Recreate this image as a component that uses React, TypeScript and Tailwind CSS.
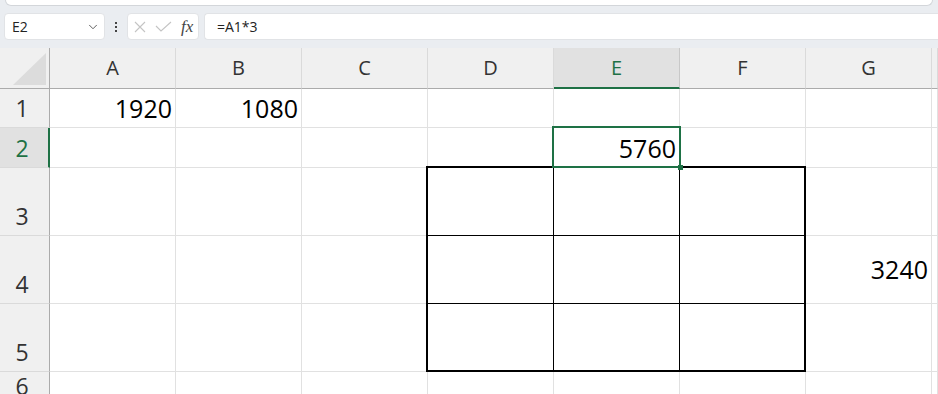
import { ChevronDown } from "lucide-react";

const COLS = ["A", "B", "C", "D", "E", "F", "G", ""];
const ROWS = [1, 2, 3, 4, 5, 6];

const VALUES: Record<string, string> = {
  "1A": "1920",
  "1B": "1080",
  "2E": "5760",
  "4G": "3240",
};

const GREEN = "#1e7145";

function inBox(row: number, col: string) {
  return row >= 3 && row <= 5 && (col === "D" || col === "E" || col === "F");
}

function Toolbar() {
  return (
    <div className="h-[48px] bg-[#eaedf1] flex flex-col">
      {/* top ribbon edge */}
      <div className="h-[6px] mx-[5px] bg-white border-x border-b border-[#d3d6da] rounded-b-[6px]" />

      {/* formula bar */}
      <div className="mt-[7px] h-[27px] flex items-stretch">
        <div className="ml-[4px] w-[101px] bg-white border border-[#e1e3e6] rounded-[4px] flex items-center pl-[7px] pr-[4px]">
          <span className="flex-1 text-[14px] text-[#222]">E2</span>
          <ChevronDown size={14} strokeWidth={1.6} className="text-[#555]" />
        </div>

        <div className="w-[22px] flex flex-col items-center justify-center gap-[2px]">
          <div className="w-[2px] h-[2px] bg-[#444]" />
          <div className="w-[2px] h-[2px] bg-[#444]" />
          <div className="w-[2px] h-[2px] bg-[#444]" />
        </div>

        <div className="w-[72px] bg-white border border-[#e1e3e6] rounded-[4px] flex items-center pl-[5px]">
          <svg width="12" height="12" viewBox="0 0 12 12" className="ml-[1px]">
            <path d="M1 1 L11 11 M11 1 L1 11" stroke="#c4c4c4" strokeWidth="1.1" fill="none" />
          </svg>
          <svg width="17" height="11" viewBox="0 0 17 11" className="ml-[9px]">
            <path d="M1 5 L6 10 L16 1" stroke="#c4c4c4" strokeWidth="1.1" fill="none" />
          </svg>
          <span
            className="ml-[9px] text-[17px] italic text-[#444] leading-none"
            style={{ fontFamily: '"Liberation Serif", serif' }}
          >
            fx
          </span>
        </div>

        <div className="ml-[5px] flex-1 bg-white border border-r-0 border-[#e1e3e6] rounded-l-[4px] flex items-center pl-[12px]">
          <span className="text-[14px] text-[#222]">=A1*3</span>
        </div>
      </div>
    </div>
  );
}

function Sheet() {
  return (
    <div className="h-[346px] overflow-hidden bg-white">
      <div className="grid grid-cols-[50px_126px_126px_126px_126px_126px_126px_126px_1fr] grid-rows-[41px_39px_40px_68px_68px_68px_34px]">
        {/* corner */}
        <div className="col-start-1 row-start-1 bg-[#f0f0f0] border-r border-b border-[#ababab]">
          <svg width="49" height="40" viewBox="0 0 49 40">
            <polygon points="46,5 46,37 13,37" fill="#dcdcdc" />
          </svg>
        </div>

        {/* column headers */}
        {COLS.map((c, i) =>
          c === "E" ? (
            <div
              key={i}
              style={{ gridRow: 1, gridColumn: i + 2 }}
              className="bg-[#e1e1e1] border-r border-r-[#c8c8c8] border-b-2 border-b-[#1e7145] flex items-center justify-center text-[20px] leading-none text-[#1e7145]"
            >
              {c}
            </div>
          ) : (
            <div
              key={i}
              style={{ gridRow: 1, gridColumn: i + 2 }}
              className="bg-[#f0f0f0] border-r border-r-[#dadada] border-b border-b-[#ababab] flex items-center justify-center text-[20px] leading-none text-[#333]"
            >
              {c}
            </div>
          )
        )}

        {/* rows */}
        {ROWS.map((r) => (
          <Row key={r} row={r} />
        ))}

        {/* medium border around D3:F5 */}
        <div className="col-start-5 col-span-3 row-start-4 row-span-3 -ml-[2px] -mt-[2px] border-2 border-black pointer-events-none" />

        {/* active cell E2 */}
        <div
          className="col-start-6 row-start-3 -ml-[2px] -mr-[1px] -mt-[2px] border-2 relative pointer-events-none"
          style={{ borderColor: GREEN }}
        >
          <div className="absolute -right-[4px] -bottom-[4px] w-[5px] h-[5px] bg-[#1e7145]" />
        </div>
      </div>
    </div>
  );
}

function Row({ row }: { row: number }) {
  return (
    <>
      {row === 2 ? (
        <div
          style={{ gridRow: row + 1, gridColumn: 1 }}
          className="bg-[#e1e1e1] border-r-2 border-r-[#1e7145] border-b border-b-[#dadada] flex items-end justify-center pr-[4px] pb-[7px] text-[23px] leading-none text-[#1e7145]"
        >
          {row}
        </div>
      ) : (
        <div
          style={{ gridRow: row + 1, gridColumn: 1 }}
          className="bg-[#f0f0f0] border-r border-r-[#ababab] border-b border-b-[#dadada] flex items-end justify-center pr-[5px] pb-[7px] text-[23px] leading-none text-[#333]"
        >
          {row}
        </div>
      )}

      {COLS.map((c, i) => {
        const v = VALUES[`${row}${c}`];
        const border = inBox(row, c)
          ? "border-r border-b border-black"
          : "border-r border-b border-[#e1e1e1]";
        const align = row === 4 && c === "G" ? "items-center" : "items-end pb-[6px]";
        return (
          <div
            key={i}
            style={{ gridRow: row + 1, gridColumn: i + 2 }}
            className={`${border} ${align} bg-white flex justify-end pr-[3px] text-[25px] leading-none text-black`}
          >
            {v}
          </div>
        );
      })}
    </>
  );
}

export default function App() {
  return (
    <div
      className="w-[938px] h-[394px] overflow-hidden bg-white"
      style={{ fontFamily: '"Open Sans", "Noto Sans", sans-serif' }}
    >
      <Toolbar />
      <Sheet />
    </div>
  );
}
